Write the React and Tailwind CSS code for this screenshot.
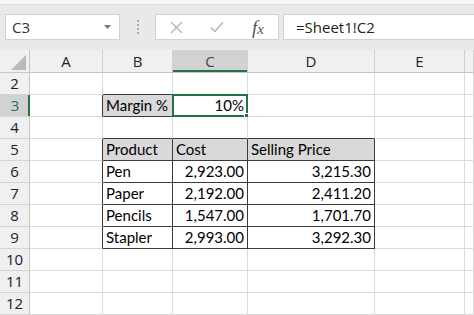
import React from 'react';

const COLS = ['A', 'B', 'C', 'D', 'E', 'F'];
const WIDTHS = { A: 'w-[73px]', B: 'w-[70px]', C: 'w-[75px]', D: 'w-[127px]', E: 'w-[90px]', F: 'flex-1' };

const rows = [
  { n: 2 },
  { n: 3, B: 'Margin %', C: '10%' },
  { n: 4 },
  { n: 5, B: 'Product', C: 'Cost', D: 'Selling Price' },
  { n: 6, B: 'Pen', C: '2,923.00', D: '3,215.30' },
  { n: 7, B: 'Paper', C: '2,192.00', D: '2,411.20' },
  { n: 8, B: 'Pencils', C: '1,547.00', D: '1,701.70' },
  { n: 9, B: 'Stapler', C: '2,993.00', D: '3,292.30' },
  { n: 10 },
  { n: 11 },
  { n: 12 },
];

// cells that carry a thin black border on every side
const boxed = (r, c) =>
  (r === 3 && (c === 'B' || c === 'C')) ||
  (r >= 5 && r <= 9 && (c === 'B' || c === 'C' || c === 'D'));

const filled = (r, c) => (r === 3 && c === 'B') || r === 5;

const nextCol = (c) => COLS[COLS.indexOf(c) + 1];

const Cell = ({ r, c, value }) => {
  const darkRight = boxed(r, c) || boxed(r, nextCol(c));
  const darkBottom = boxed(r, c) || boxed(r + 1, c);
  const isNum = value && /^[\d,.%]+$/.test(value);
  const selected = r === 3 && c === 'C';
  return (
    <div
      className={[
        'relative h-full shrink-0 flex items-end pb-[1px] px-[3px] border-r border-b text-[15px] text-black leading-none',
        WIDTHS[c],
        darkRight ? 'border-r-[#3a3a3a]' : 'border-r-[#dadada]',
        darkBottom ? 'border-b-[#3a3a3a]' : 'border-b-[#dadada]',
        filled(r, c) && boxed(r, c) ? 'bg-[#d9d9d9]' : 'bg-white',
        isNum ? 'justify-end' : 'justify-start',
      ].join(' ')}
    >
      <span className="pb-[2px]">{value}</span>
      {selected && (
        <div className="absolute -left-[1px] -top-[1px] -right-[1px] -bottom-[1px] border-2 border-[#217346]">
          <div className="absolute -right-[4px] -bottom-[4px] w-[6px] h-[6px] bg-[#217346] border border-white" />
        </div>
      )}
    </div>
  );
};

export default function App() {
  return (
    <div className="w-[474px] h-[315px] overflow-hidden bg-white font-['Lato','Liberation_Sans',sans-serif]">
      {/* window top edge */}
      <div className="h-[5px] bg-[#f6f6f6] border-b border-[#dcdcdc]" />

      {/* formula bar */}
      <div className="h-[45px] bg-[#e9e9e9] flex items-start pt-[9px] font-['Open_Sans','Noto_Sans',sans-serif]">
        <div className="ml-[5px] w-[115px] h-[26px] bg-white border border-[#d2d2d2] flex items-center justify-between pl-[6px] pr-[8px]">
          <span className="text-[15px] text-[#333]">C3</span>
          <svg width="7" height="4" viewBox="0 0 7 4"><path d="M0 0h7L3.5 4z" fill="#777" /></svg>
        </div>
        <div className="w-[35px] h-[26px] flex flex-col items-center justify-center gap-[2px]">
          <span className="w-[2px] h-[2px] bg-[#aaa]" />
          <span className="w-[2px] h-[2px] bg-[#aaa]" />
          <span className="w-[2px] h-[2px] bg-[#aaa]" />
          <span className="w-[2px] h-[2px] bg-[#aaa]" />
        </div>
        <div className="w-[124px] h-[26px] bg-white border border-[#d2d2d2] flex items-center">
          <div className="w-[40px] flex justify-center">
            <svg width="13" height="13" viewBox="0 0 13 13"><path d="M1 1l11 11M12 1L1 12" stroke="#b4b4b4" strokeWidth="1.3" /></svg>
          </div>
          <div className="w-[42px] flex justify-center">
            <svg width="14" height="12" viewBox="0 0 14 12"><path d="M1 6.5l4 4L13 1" stroke="#b4b4b4" strokeWidth="1.4" fill="none" /></svg>
          </div>
          <div className="w-[40px] flex justify-center">
            <span className="font-['Liberation_Serif',serif] italic text-[19px] text-[#555] leading-none">
              f<span className="text-[15px]">x</span>
            </span>
          </div>
        </div>
        <div className="ml-[4px] flex-1 h-[26px] bg-white border border-[#d2d2d2] border-r-0 flex items-center pl-[12px]">
          <span className="text-[15px] text-[#222]">=Sheet1!C2</span>
        </div>
      </div>

      {/* column headers */}
      <div className="h-[23px] flex bg-[#f0f0f0] border-b border-[#c6c6c6] font-['Open_Sans','Noto_Sans',sans-serif] text-[15px] text-[#222]">
        <div className="w-[30px] shrink-0 border-r border-[#c6c6c6] flex items-end justify-end pr-[3px] pb-[2px]">
          <svg width="15" height="15" viewBox="0 0 15 15"><path d="M15 0v15H0z" fill="#b9b9b9" /></svg>
        </div>
        {COLS.map((c) => (
          <div
            key={c}
            className={[
              'shrink-0 h-full flex items-center justify-center border-r border-[#d0d0d0]',
              WIDTHS[c],
              c === 'C' ? 'bg-[#d2d2d2] text-[#444] shadow-[inset_0_-2px_0_#217346]' : '',
            ].join(' ')}
          >
            {c === 'F' ? '' : c}
          </div>
        ))}
      </div>

      {/* grid rows */}
      {rows.map((row) => (
        <div key={row.n} className="h-[22px] flex">
          <div
            className={[
              'w-[30px] shrink-0 h-full flex items-center justify-center border-b border-[#d4d4d4] font-["Open_Sans","Noto_Sans",sans-serif] text-[15px]',
              row.n === 3
                ? 'bg-[#d2d2d2] text-[#217346] shadow-[inset_-2px_0_0_#217346]'
                : 'bg-[#f0f0f0] text-[#222] border-r border-r-[#c6c6c6]',
            ].join(' ')}
          >
            {row.n}
          </div>
          {COLS.map((c) => (
            <Cell key={c} r={row.n} c={c} value={row[c]} />
          ))}
        </div>
      ))}
    </div>
  );
}
